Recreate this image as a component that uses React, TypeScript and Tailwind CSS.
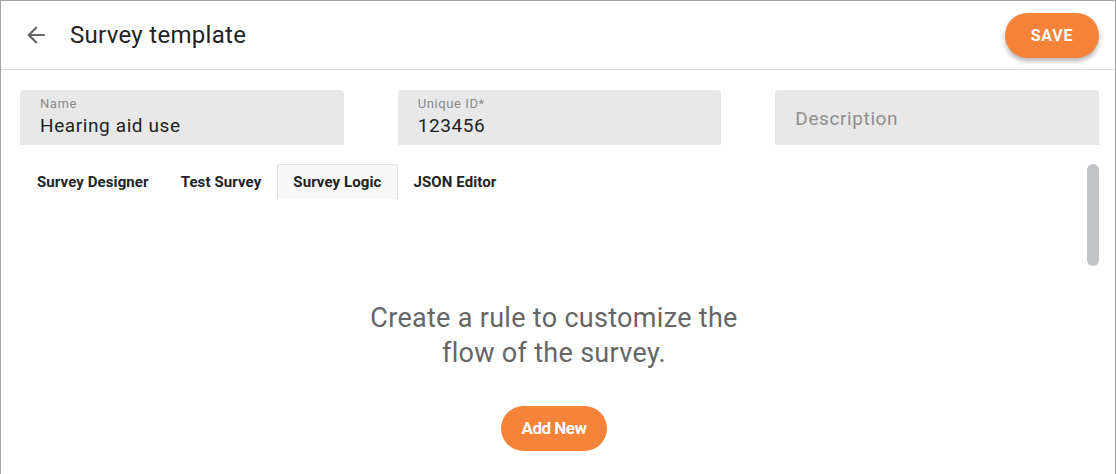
import { useState } from 'react';

const tabs = ['Survey Designer', 'Test Survey', 'Survey Logic', 'JSON Editor'];

function Field({ label, value, placeholder }: { label?: string; value?: string; placeholder?: string }) {
  return (
    <div className="h-[55px] flex-1 rounded-t-[4px] bg-[#e8e8e8] px-5">
      {label ? (
        <div className="flex flex-col pt-[5px]">
          <span className="text-[13px] leading-[17px] tracking-[0.6px] text-[#8a8a8a]">{label}</span>
          <span className="mt-[2px] text-[19px] leading-[24px] tracking-[0.6px] text-[#222]">{value}</span>
        </div>
      ) : (
        <div className="pt-[17px] text-[19px] leading-[24px] tracking-[0.6px] text-[#8f8f8f]">{placeholder}</div>
      )}
    </div>
  );
}

export default function App() {
  const [active, setActive] = useState('Survey Logic');

  return (
    <div className="h-[474px] w-[1116px] overflow-hidden border-l border-r border-t border-[#a3a3a3] bg-white font-['Roboto',sans-serif]">
      {/* Header */}
      <div className="flex h-[69px] items-center border-b border-[#dcdcdc] pl-[22px] pr-[16px]">
        <button className="text-[#666]">
          <svg className="h-[26px] w-[26px]" viewBox="0 0 24 24" fill="currentColor">
            <path d="M20 11H7.83l5.59-5.59L12 4l-8 8 8 8 1.41-1.41L7.83 13H20v-2z" />
          </svg>
        </button>
        <h1 className="ml-[21px] text-[24px] font-normal tracking-[0.3px] text-[#222]">Survey template</h1>
        <button className="ml-auto mt-[1px] h-[45px] w-[94px] rounded-full bg-[#f5833a] text-[16px] font-bold tracking-[0.8px] text-white shadow-[0_3px_5px_rgba(0,0,0,0.3)]">
          SAVE
        </button>
      </div>

      {/* Fields */}
      <div className="flex gap-[54px] pl-[19px] pr-[16px] pt-[20px]">
        <Field label="Name" value="Hearing aid use" />
        <Field label="Unique ID*" value="123456" />
        <Field placeholder="Description" />
      </div>

      {/* Tabs + content */}
      <div className="relative">
        <div className="flex pl-[20px] pt-[19px]">
          {tabs.map((t) => (
            <button
              key={t}
              onClick={() => setActive(t)}
              className={
                'h-[35px] px-[15px] pt-[1px] text-[15px] font-bold tracking-[0.1px] text-[#222] ' +
                (active === t ? 'rounded-t-[3px] border border-b-0 border-[#e2e2e2] bg-[#f8f8f8]' : 'border border-transparent')
              }
            >
              {t}
            </button>
          ))}
        </div>

        <div className="absolute right-[16px] top-[19px] h-[102px] w-[12px] rounded-full bg-[#c1c3c7]" />

        <div className="flex flex-col items-center pr-[8px] pt-[102px]">
          <p className="text-center text-[27px] leading-[35px] tracking-[0.3px] text-[#666]">
            Create a rule to customize the
            <br />
            flow of the survey.
          </p>
          <button className="mt-[35px] h-[45px] w-[106px] rounded-full bg-[#f5833a] text-[17px] font-bold tracking-[-0.5px] text-white">
            Add New
          </button>
        </div>
      </div>
    </div>
  );
}
